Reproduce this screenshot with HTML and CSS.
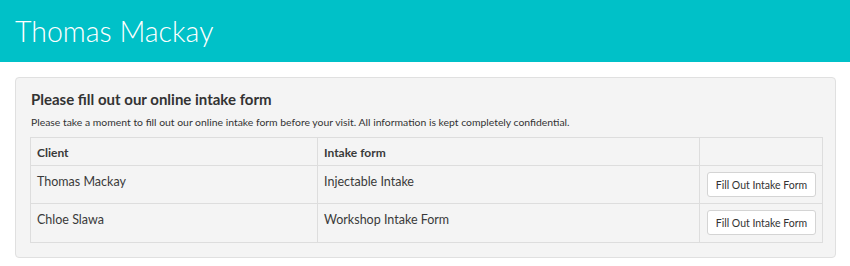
FILE: index.html
```html
<!DOCTYPE html>
<html lang="en">
<head>
  <meta charset="UTF-8">
  <title>Intake Forms</title>
  <link rel="stylesheet" href="styles.css">
</head>
<body>
  <header class="topbar">
    <h1>Thomas Mackay</h1>
  </header>

  <div class="panel">
    <h2>Please fill out our online intake form</h2>
    <p>Please take a moment to fill out our online intake form before your visit. All information is kept completely confidential.</p>
    <table class="intake-table">
      <colgroup>
        <col class="col-client">
        <col class="col-form">
        <col class="col-action">
      </colgroup>
      <thead>
        <tr>
          <th>Client</th>
          <th>Intake form</th>
          <th></th>
        </tr>
      </thead>
      <tbody>
        <tr>
          <td>Thomas Mackay</td>
          <td>Injectable Intake</td>
          <td class="action"><button class="btn">Fill Out Intake Form</button></td>
        </tr>
        <tr>
          <td>Chloe Slawa</td>
          <td>Workshop Intake Form</td>
          <td class="action"><button class="btn">Fill Out Intake Form</button></td>
        </tr>
      </tbody>
    </table>
  </div>
</body>
</html>
```

FILE: styles.css
```css
body { margin: 0; font-family: Lato, "Open Sans", Arial, sans-serif; color: #333; background: #fff; }
.topbar { background: #00c1c8; height: 62px; padding: 0 15px; display: flex; align-items: center; box-sizing: border-box; }
.topbar h1 { margin: 0 0 1px; font-size: 28.5px; font-weight: 300; color: #fff; }

.panel { width: 792px; margin: 15px 0 0 15px; padding: 12px 13px 14px 14px; background: #f4f4f4; border: 1px solid #e0e0e0; border-radius: 4px; }
.panel h2 { margin: 0 0 7px 1px; font-size: 15px; font-weight: bold; color: #333; line-height: 18px; }
.panel p { margin: 0 0 8px 1px; font-size: 10.4px; line-height: 14px; color: #333; }

.intake-table { width: 792px; table-layout: fixed; border-collapse: collapse; font-size: 12.5px; color: #3a3a3a; border: 1px solid #ddd; }
.col-client { width: 287px; }
.col-form { width: 382px; }
.col-action { width: 123px; }
.intake-table th, .intake-table td { border: 1px solid #ddd; text-align: left; vertical-align: top; padding: 0 6px; }
.intake-table th { height: 26px; vertical-align: middle; font-size: 12px; font-weight: bold; padding-top: 1px; }
.intake-table td { height: 29px; padding-top: 8px; line-height: 15px; }
.intake-table tbody tr:last-child td { height: 30px; }
.intake-table td.action { padding: 6px 7px; height: 25px; }
.intake-table tbody tr:last-child td.action { height: 26px; }

.btn { font-family: inherit; font-size: 10.5px; color: #333; background: #fff; border: 1px solid #d4d4d4; border-radius: 3px; width: 109px; height: 25px; padding: 0; white-space: nowrap; cursor: pointer; }
```
